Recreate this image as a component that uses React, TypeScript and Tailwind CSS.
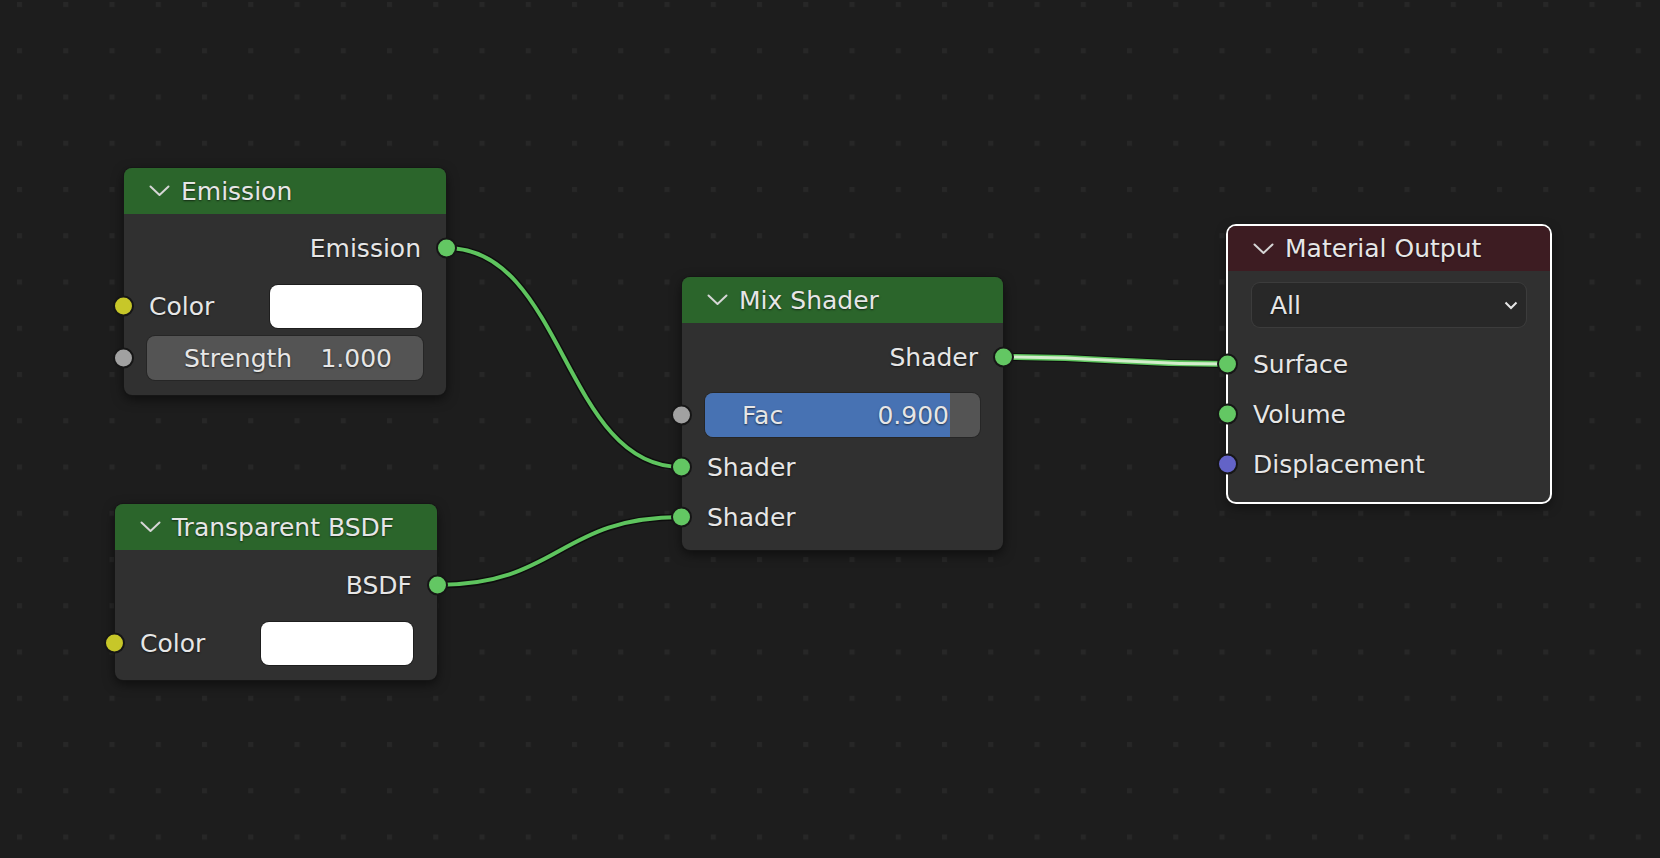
import React from "react"

type SocketKind = "shader" | "color" | "float" | "vector"

const socketColor: Record<SocketKind, string> = {
  shader: "bg-[#63c763]",
  color: "bg-[#c7c729]",
  float: "bg-[#a1a1a1]",
  vector: "bg-[#6363c7]",
}

function Socket({ kind, side }: { kind: SocketKind; side: "in" | "out" }) {
  return (
    <span
      className={`absolute top-1/2 -translate-y-1/2 w-[21px] h-[21px] rounded-full border-2 border-[#161616] ${socketColor[kind]} ${
        side === "in" ? "-left-[11px]" : "-right-[11px]"
      }`}
    />
  )
}

function Chevron() {
  return (
    <svg width="21" height="12" viewBox="0 0 21 12" className="shrink-0">
      <polyline points="1.5,1.5 10.5,10 19.5,1.5" fill="none" stroke="#d6d6d6" strokeWidth="2" strokeLinejoin="round" strokeLinecap="round" />
    </svg>
  )
}

interface NodeProps {
  title: string
  header: string
  className: string
  selected?: boolean
  children: React.ReactNode
}

function Node({ title, header, className, selected, children }: NodeProps) {
  return (
    <div
      className={`absolute rounded-[8px] bg-[#303030] shadow-[0_4px_12px_rgba(0,0,0,0.55)] ${
        selected ? "ring-2 ring-white" : "ring-1 ring-[#161616]"
      } ${className}`}
    >
      <div className={`flex items-center gap-[11px] pl-[25px] rounded-t-[8px] ${header} ${selected ? "h-[45px]" : "h-[46px]"}`}>
        <Chevron />
        <span className="text-[25px] text-[#e6e6e6] leading-none [text-shadow:0_1px_2px_rgba(0,0,0,0.6)]">{title}</span>
      </div>
      {children}
    </div>
  )
}

function Label({ children }: { children: React.ReactNode }) {
  return <span className="text-[25px] leading-none text-[#e6e6e6] [text-shadow:0_1px_2px_rgba(0,0,0,0.6)]">{children}</span>
}

function OutputRow({ label, className }: { label: string; className: string }) {
  return (
    <div className={`relative h-[44px] flex items-center justify-end pr-[25px] ${className}`}>
      <Label>{label}</Label>
      <Socket kind="shader" side="out" />
    </div>
  )
}

function InputRow({ label, kind, className }: { label: string; kind: SocketKind; className: string }) {
  return (
    <div className={`relative h-[44px] flex items-center pl-[25px] ${className}`}>
      <Label>{label}</Label>
      <Socket kind={kind} side="in" />
    </div>
  )
}

function ColorRow({ className }: { className: string }) {
  return (
    <div className={`relative h-[44px] flex items-center pl-[25px] pr-[24px] ${className}`}>
      <Label>Color</Label>
      <div className="ml-auto w-[152px] h-[43px] rounded-[8px] bg-white ring-1 ring-[#1e1e1e]" />
      <Socket kind="color" side="in" />
    </div>
  )
}

function ValueRow({ label, value, fill, className }: { label: string; value: string; fill?: boolean; className: string }) {
  return (
    <div className={`relative h-[44px] flex items-center px-[23px] ${className}`}>
      <div className="relative flex-1 h-full rounded-[8px] bg-[#545454] ring-1 ring-[#262626] overflow-hidden">
        {fill && <div className="absolute left-0 top-0 bottom-0 w-[89.2%] bg-[#4772b3]" />}
        <div className="relative h-full flex items-center justify-between pl-[37px] pr-[31px]">
          <Label>{label}</Label>
          <Label>{value}</Label>
        </div>
      </div>
      <Socket kind="float" side="in" />
    </div>
  )
}

export default function App() {
  return (
    <div className="relative w-[1660px] h-[858px] overflow-hidden bg-[#1d1d1d] font-['DejaVu_Sans',sans-serif]">
      <svg className="absolute inset-0" width="1660" height="858">
        <defs>
          <pattern id="grid" x="17" y="2" width="46.25" height="46.25" patternUnits="userSpaceOnUse">
            <rect x="0" y="0" width="5" height="5" fill="#272727" />
          </pattern>
        </defs>
        <rect width="1660" height="858" fill="url(#grid)" />
        <g fill="none" strokeLinecap="round">
          <path d="M447 248 C564 248, 564 467, 681 467" stroke="rgba(0,0,0,0.55)" strokeWidth="7" />
          <path d="M447 248 C564 248, 564 467, 681 467" stroke="#5ec45e" strokeWidth="4" />
          <path d="M437 585 C559 585, 559 517, 681 517" stroke="rgba(0,0,0,0.55)" strokeWidth="7" />
          <path d="M437 585 C559 585, 559 517, 681 517" stroke="#5ec45e" strokeWidth="4" />
          <path d="M1003 357 C1115 357, 1115 364, 1228 364" stroke="rgba(0,0,0,0.55)" strokeWidth="8" />
          <path d="M1003 357 C1115 357, 1115 364, 1228 364" stroke="#5ec45e" strokeWidth="6" />
          <path d="M1003 357 C1115 357, 1115 364, 1228 364" stroke="#d4edcd" strokeWidth="3" />
        </g>
      </svg>

      <Node title="Emission" header="bg-[#2b652b]" className="left-[124px] top-[168px] w-[322px] h-[227px]">
        <OutputRow label="Emission" className="mt-[12px]" />
        <ColorRow className="mt-[14px]" />
        <ValueRow label="Strength" value="1.000" className="mt-[8px]" />
      </Node>

      <Node title="Transparent BSDF" header="bg-[#2b652b]" className="left-[115px] top-[504px] w-[322px] h-[176px]">
        <OutputRow label="BSDF" className="mt-[13px]" />
        <ColorRow className="mt-[14px]" />
      </Node>

      <Node title="Mix Shader" header="bg-[#2b652b]" className="left-[682px] top-[277px] w-[321px] h-[273px]">
        <OutputRow label="Shader" className="mt-[12px]" />
        <ValueRow label="Fac" value="0.900" fill className="mt-[14px]" />
        <InputRow label="Shader" kind="shader" className="mt-[8px]" />
        <InputRow label="Shader" kind="shader" className="mt-[6px]" />
      </Node>

      <Node title="Material Output" header="bg-[#3d1c22]" selected className="left-[1228px] top-[226px] w-[322px] h-[276px]">
        <div className="mt-[12px] h-[44px] px-[24px] flex">
          <div className="flex-1 h-full rounded-[8px] bg-[#282828] ring-1 ring-[#3c3c3c] flex items-center pl-[18px] pr-[8px]">
            <Label>All</Label>
            <svg width="14" height="9" viewBox="0 0 14 9" className="ml-auto">
              <polyline points="1.5,1.5 7,7 12.5,1.5" fill="none" stroke="#e6e6e6" strokeWidth="2" />
            </svg>
          </div>
        </div>
        <InputRow label="Surface" kind="shader" className="mt-[15px]" />
        <InputRow label="Volume" kind="shader" className="mt-[6px]" />
        <InputRow label="Displacement" kind="vector" className="mt-[6px]" />
      </Node>
    </div>
  )
}
